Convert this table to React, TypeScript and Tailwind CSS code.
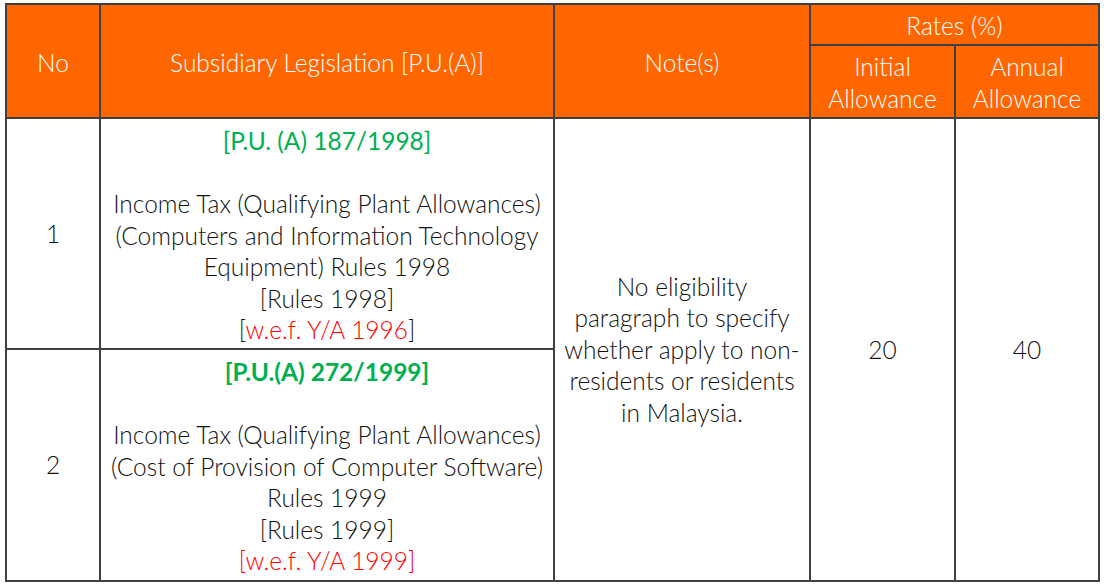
const cell = "border-2 border-[#404040] text-center align-middle";
const head = `${cell} bg-[#ff6600] text-white font-light`;

export default function App() {
  return (
    <div className="min-h-screen bg-white pl-[5px] pt-[3px] font-['Lato',sans-serif] text-[24.5px] leading-[31.5px] text-[#111111]">
      <table className="table-fixed border-collapse">
        <colgroup>
          <col className="w-[94px]" />
          <col className="w-[454px]" />
          <col className="w-[256px]" />
          <col className="w-[145px]" />
          <col className="w-[144px]" />
        </colgroup>
        <thead>
          <tr className="h-[41px]">
            <th rowSpan={2} className={`${head} pt-[3px]`}>No</th>
            <th rowSpan={2} className={`${head} pt-[3px]`}>Subsidiary Legislation [P.U.(A)]</th>
            <th rowSpan={2} className={`${head} pt-[3px]`}>Note(s)</th>
            <th colSpan={2} className={`${head} pt-[3px]`}>Rates (%)</th>
          </tr>
          <tr className="h-[73px]">
            <th className={`${head} pt-[2px]`}>
              Initial
              <br />
              Allowance
            </th>
            <th className={`${head} pt-[2px]`}>
              Annual
              <br />
              Allowance
            </th>
          </tr>
        </thead>
        <tbody className="font-light">
          <tr className="h-[231px]">
            <td className={cell}>1</td>
            <td className={`${cell} align-top pt-[6px]`}>
              <span className="text-[#00b050] font-normal">[P.U. (A) 187/1998]</span>
              <br />
              <br />
              Income Tax (Qualifying Plant Allowances)
              <br />
              (Computers and Information Technology
              <br />
              Equipment) Rules 1998
              <br />
              [Rules 1998]
              <br />[<span className="text-[#ff0000]">w.e.f. Y/A 1996</span>]
            </td>
            <td rowSpan={2} className={cell}>
              No eligibility
              <br />
              paragraph to specify
              <br />
              whether apply to non-
              <br />
              residents or residents
              <br />
              in Malaysia.
            </td>
            <td rowSpan={2} className={cell}>20</td>
            <td rowSpan={2} className={cell}>40</td>
          </tr>
          <tr className="h-[232px]">
            <td className={cell}>2</td>
            <td className={`${cell} align-top pt-[6px]`}>
              <span className="text-[#00b050] font-bold">[P.U.(A) 272/1999]</span>
              <br />
              <br />
              Income Tax (Qualifying Plant Allowances)
              <br />
              (Cost of Provision of Computer Software)
              <br />
              Rules 1999
              <br />
              [Rules 1999]
              <br />
              <span className="text-[#ff0000]">[w.e.f. Y/A 1999]</span>
            </td>
          </tr>
        </tbody>
      </table>
    </div>
  );
}
